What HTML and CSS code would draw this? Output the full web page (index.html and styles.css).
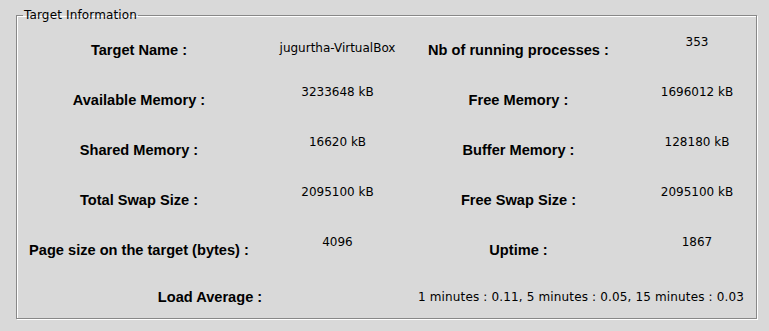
FILE: index.html
```html
<!DOCTYPE html>
<html lang="en">
<head>
  <meta charset="UTF-8" />
  <meta name="viewport" content="width=device-width, initial-scale=1.0"/>
  <title>Target Information</title>
  <link rel="stylesheet" href="styles.css">
</head>
<body>
  <fieldset class="frame">
    <legend>Target Information</legend>
    <div class="grid">
      <div class="label">Target Name :</div>
      <div class="value host">jugurtha-VirtualBox</div>
      <div class="label">Nb of running processes :</div>
      <div class="value right">353</div>

      <div class="label">Available Memory :</div>
      <div class="value">3233648 kB</div>
      <div class="label">Free Memory :</div>
      <div class="value right">1696012 kB</div>

      <div class="label">Shared Memory :</div>
      <div class="value">16620 kB</div>
      <div class="label">Buffer Memory :</div>
      <div class="value right">128180 kB</div>

      <div class="label">Total Swap Size :</div>
      <div class="value">2095100 kB</div>
      <div class="label">Free Swap Size :</div>
      <div class="value right">2095100 kB</div>

      <div class="label">Page size on the target (bytes) :</div>
      <div class="value">4096</div>
      <div class="label">Uptime :</div>
      <div class="value right">1867</div>

      <div class="label load-label">Load Average :</div>
      <div class="value load-value">1 minutes : 0.11, 5 minutes : 0.05, 15 minutes : 0.03</div>
    </div>
  </fieldset>
</body>
</html>
```

FILE: styles.css
```css
body {
  margin: 0;
  background: #d9d9d9;
  color: #000;
  font-family: "DejaVu Sans", sans-serif;
  height: 331px;
  overflow: hidden;
}

.frame {
  margin: 8px 12px 0 16px;
  padding: 2px 0 0 0;
  border: 1px solid #888;
  box-shadow: 1px 1px 0 #fff, inset 1px 1px 0 #fff;
  min-width: 0;
}

.frame legend {
  margin-left: 6px;
  padding: 0 1px;
  font-size: 12px;
  line-height: 15px;
  letter-spacing: 0.15px;
}

.grid {
  display: grid;
  padding-left: 1px;
  grid-template-columns: 242px 155px 207px 1fr;
  grid-template-rows: repeat(5, 50px) 43px;
}

.label {
  font-family: "Liberation Sans", Arial, sans-serif;
  font-weight: bold;
  font-size: 14.6px;
  text-align: center;
  align-self: center;
  white-space: nowrap;
}

.value {
  font-size: 12px;
  text-align: center;
  align-self: center;
  margin-bottom: 17px;
  white-space: nowrap;
}

.value.host {
  margin-bottom: 4px;
}

.value.right {
  padding-left: 16px;
}

.load-label {
  grid-column: 1 / 3;
  padding-right: 13px;
}

.load-value {
  grid-column: 3 / 5;
  margin-bottom: 0;
  padding-right: 9px;
  letter-spacing: 0.15px;
}
```
